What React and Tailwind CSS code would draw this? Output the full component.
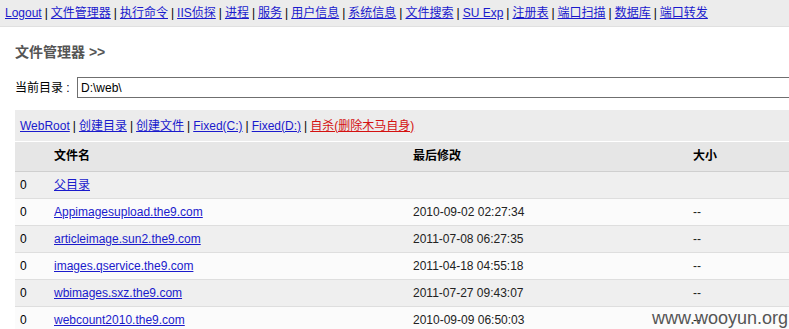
import React from "react";

const navLinks = [
  "Logout",
  "文件管理器",
  "执行命令",
  "IIS侦探",
  "进程",
  "服务",
  "用户信息",
  "系统信息",
  "文件搜索",
  "SU Exp",
  "注册表",
  "端口扫描",
  "数据库",
  "端口转发",
];

const rows = [
  { name: "父目录", time: "", size: "" },
  { name: "Appimagesupload.the9.com", time: "2010-09-02 02:27:34", size: "--" },
  { name: "articleimage.sun2.the9.com", time: "2011-07-08 06:27:35", size: "--" },
  { name: "images.qservice.the9.com", time: "2011-04-18 04:55:18", size: "--" },
  { name: "wbimages.sxz.the9.com", time: "2011-07-27 09:43:07", size: "--" },
  { name: "webcount2010.the9.com", time: "2010-09-09 06:50:03", size: "--" },
];

const font = "font-['Liberation_Sans','Noto_Sans_CJK_SC',sans-serif]";

export default function App() {
  return (
    <div className={`relative w-[789px] h-[329px] overflow-hidden bg-white text-[12px] text-black ${font}`}>
      {/* top nav */}
      <div className="h-[27px] bg-[#ececec] border-b border-[#e0e0e0] flex items-center pl-[5px] whitespace-nowrap leading-none">
        {navLinks.map((l, i) => (
          <span key={l}>
            {i > 0 && <span className="text-black mx-[3px]">|</span>}
            <a className="text-[#1a1acc] underline cursor-pointer">{l}</a>
          </span>
        ))}
      </div>

      <div className="pl-[15px]">
        <h2 className="mt-[17px] text-[14px] leading-[16px] font-bold text-[#555]">文件管理器 &gt;&gt;</h2>

        {/* current dir */}
        <div className="mt-[17px] flex items-center h-[21px]">
          <span className="w-[62px] text-[12px]">当前目录 :</span>
          <div className="flex-1 h-[21px] border border-[#6f6f6f] border-r-0 flex items-center pl-[3px] text-[12px]">
            D:\web\
          </div>
        </div>

        {/* actions */}
        <div className="mt-[12px] h-[31px] bg-[#ececec] flex items-center pl-[5px] whitespace-nowrap">
          <a className="text-[#1a1acc] underline">WebRoot</a>
          <span className="mx-[3px]">|</span>
          <a className="text-[#1a1acc] underline">创建目录</a>
          <span className="mx-[3px]">|</span>
          <a className="text-[#1a1acc] underline">创建文件</a>
          <span className="mx-[3px]">|</span>
          <a className="text-[#1a1acc] underline">Fixed(C:)</a>
          <span className="mx-[3px]">|</span>
          <a className="text-[#1a1acc] underline">Fixed(D:)</a>
          <span className="mx-[3px]">|</span>
          <a className="text-[#d41111] underline">自杀(删除木马自身)</a>
        </div>

        {/* file table */}
        <table className="w-[774px] border-collapse mt-px table-fixed">
          <colgroup>
            <col className="w-[35px]" />
            <col className="w-[359px]" />
            <col className="w-[280px]" />
            <col className="w-[100px]" />
          </colgroup>
          <thead>
            <tr className="h-[29px] bg-[#e6e6e6] border-b border-[#cfcfcf] text-left">
              <th className="pl-[5px]"></th>
              <th className="pl-[4px] font-bold">文件名</th>
              <th className="pl-[4px] font-bold">最后修改</th>
              <th className="pl-[4px] font-bold">大小</th>
            </tr>
          </thead>
          <tbody>
            {rows.map((r, i) => (
              <tr
                key={r.name}
                className={`h-[27px] border-b border-[#dedede] ${i % 2 === 0 ? "bg-[#efefef]" : "bg-[#fbfbfb]"}`}
              >
                <td className="pl-[5px]">0</td>
                <td className="pl-[4px]">
                  <a className="text-[#1a1acc] underline">{r.name}</a>
                </td>
                <td className="pl-[4px] text-[#222]">{r.time}</td>
                <td className="pl-[4px] text-[#222]">{r.size}</td>
              </tr>
            ))}
          </tbody>
        </table>
      </div>

      {/* watermark */}
      <div className="absolute right-[1px] bottom-[1px] text-[18px] leading-[20px] text-[#555] font-['Liberation_Sans',sans-serif]">
        www.wooyun.org
      </div>
    </div>
  );
}
